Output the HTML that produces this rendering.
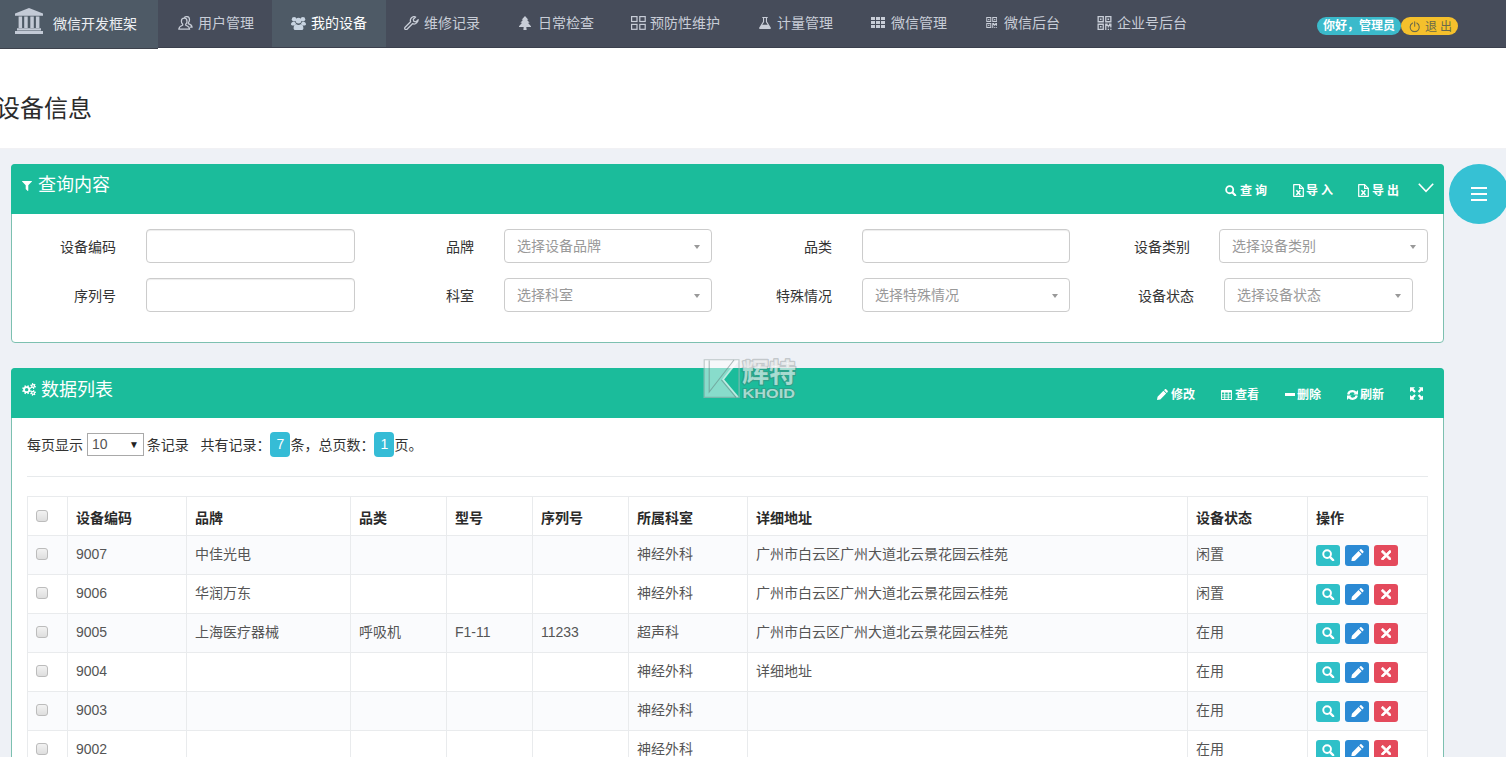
<!DOCTYPE html>
<html lang="zh-CN">
<head>
<meta charset="utf-8">
<title>设备信息</title>
<style>
*{box-sizing:border-box}
html,body{margin:0;padding:0}
body{width:1506px;height:757px;overflow:hidden;position:relative;background:#eef1f6;
 font-family:"Liberation Sans","Noto Sans CJK SC",sans-serif;font-size:14px;color:#333;line-height:20px}
.abs{position:absolute}
svg{display:block;fill:currentColor}
.ic{position:absolute}
/* ---------- navbar ---------- */
#nav{position:absolute;left:0;top:0;width:1506px;height:48px;background:#464c5a;border-bottom:1px solid #3b404d}
#brand{position:absolute;left:0;top:0;width:158px;height:49px;background:#4e5a66;border-bottom:1px solid #3d424c;z-index:5}
#brand svg{color:#c3cad6}
#brand .t{position:absolute;left:53px;top:14px;line-height:20px;font-size:14px;color:#eceff2;white-space:nowrap}
.ni{color:#c8cdd7;font-size:14px;white-space:nowrap}
.ni.on .t{color:#fff}
.ni.on svg{color:#c8d4e1}
.ni .t{position:absolute;top:13px;line-height:20px}
.bdg{position:absolute;top:17px;height:18px;border-radius:9px;font-size:12px;line-height:18px;white-space:nowrap}
/* ---------- header ---------- */
#hd{position:absolute;left:0;top:48px;width:1506px;height:101px;background:#fff;border-bottom:1px solid #f1f1f4}
#hd h2{position:absolute;left:-4px;top:45px;margin:0;font-size:24px;line-height:32px;font-weight:400;color:#2b2b2b;white-space:nowrap}
/* ---------- panels ---------- */
.panel{position:absolute;left:11px;width:1433px;background:#fff;border:1px solid #7cc0b0;border-radius:4px}
.ph{position:absolute;left:-1px;top:-1px;width:1433px;height:50px;background:#1bbc9b;border-radius:4px 4px 0 0;color:#fff}
.ph .ttl{position:absolute;top:10px;font-size:18px;line-height:24px;white-space:nowrap}
.hb{position:absolute;top:18px;font-size:12px;line-height:18px;font-weight:700;white-space:nowrap;color:#fff}
.lbl{position:absolute;width:120px;text-align:right;line-height:20px;color:#333;white-space:nowrap}
.inp{position:absolute;height:34px;border:1px solid #ccc;border-radius:4px;background:#fff;box-shadow:inset 0 1px 1px rgba(0,0,0,.075)}
.sel{position:absolute;height:34px;border:1px solid #ccc;border-radius:4px;background:#fff;color:#999;padding-left:12px;line-height:32px;white-space:nowrap}
.sel i{position:absolute;right:11.5px;top:14.5px;width:0;height:0;border-left:3.5px solid transparent;border-right:3.5px solid transparent;border-top:4.5px solid #999}
/* ---------- table ---------- */
table{position:absolute;left:15px;top:127px;border-collapse:collapse;table-layout:fixed;width:1401px}
td,th{border:1px solid #e9ebed;height:39px;padding:0 0 0 8px;text-align:left;white-space:nowrap;overflow:hidden;font-size:14px;line-height:20px}
th{font-weight:700;color:#2a2a2a;padding-top:3px}
td{color:#555;padding-bottom:2px}
tr.s td{background:#fafbfd}
.cb{display:block;width:12px;height:12px;border:1px solid #bcbcbc;border-radius:3px;background:linear-gradient(#f2f2f2,#dedede);margin:1px 0 0 0}
th .cb{margin-top:-4px}
td .cb{margin-top:0}
.bt{display:inline-block;vertical-align:top;width:24px;height:21px;border-radius:3px;margin-right:5px;position:relative;top:1px}
.bt{color:#fff}
.b1{background:#2fc0c8}.b2{background:#2b8ad4}.b3{background:#e44a5c}
.tag{display:inline-block;width:20px;height:25px;line-height:25px;border-radius:4px;background:#35bcd6;color:#fff;text-align:center;vertical-align:middle;position:relative;top:-2px}
</style>
</head>
<body>
<svg width="0" height="0" style="position:absolute">
<defs>
 <symbol id="i-bank" viewBox="0 0 28 26"><path d="M14 0 L28 5.6 V7.8 H0 V5.6 Z M3.6 8.4 h3.5 v11.6 h-3.5z M9.2 8.4 h3.5 v11.6 h-3.5z M15.3 8.4 h3.5 v11.6 h-3.5z M20.9 8.4 h3.5 v11.6 h-3.5z M2 20.3 h24 v2.3 h-24z M0 23 h28 v2.9 h-28z"/></symbol>
 <symbol id="i-user" viewBox="0 0 15 14"><g fill="none" stroke="currentColor" stroke-width="1.25" stroke-linejoin="round" stroke-linecap="round"><path d="M6.2 2.2 C8 2.2 9 3.6 9 5.3 C9 6.6 8.5 7.6 7.7 8.3 V9.2 C9.3 9.9 11.4 10.3 11.6 13.2 H0.8 C1 10.3 3.1 9.9 4.7 9.2 V8.3 C3.9 7.6 3.4 6.6 3.4 5.3 C3.4 3.6 4.4 2.2 6.2 2.2 Z"/><path d="M6.6 1.3 C7.2 0.8 7.9 0.6 8.7 0.6 C10.5 0.6 11.5 2 11.5 3.7 C11.5 5 11 6 10.2 6.7 V7.6 C11.8 8.3 13.9 8.7 14.1 11.2 H12.3"/></g></symbol>
 <symbol id="i-users" viewBox="0 0 15 14"><circle cx="3.1" cy="3.2" r="2.3"/><circle cx="11.9" cy="3.2" r="2.3"/><circle cx="7.5" cy="4.6" r="2.9"/><path d="M0 8.6 C0 6.6 1.2 5.8 2.6 5.8 C3.3 5.8 4 6.1 4.4 6.5 C4.6 7.3 5 7.9 5.5 8.3 C4.6 8.4 3.9 8.8 3.4 9.4 H1.2 C0.4 9.4 0 9.1 0 8.6Z"/><path d="M15 8.6 C15 6.6 13.8 5.8 12.4 5.8 C11.7 5.8 11 6.1 10.6 6.5 C10.4 7.3 10 7.9 9.5 8.3 C10.4 8.4 11.1 8.8 11.6 9.4 H13.8 C14.6 9.4 15 9.1 15 8.6Z"/><path d="M2.6 12.2 C2.6 9.8 3.8 8.3 5.4 8.3 C6 8.7 6.7 9 7.5 9 C8.3 9 9 8.7 9.6 8.3 C11.2 8.3 12.4 9.8 12.4 12.2 C12.4 13.3 11.7 14 10.7 14 H4.3 C3.3 14 2.6 13.3 2.6 12.2Z"/></symbol>
 <symbol id="i-wrench" viewBox="0 0 15 14"><path fill="none" stroke="currentColor" stroke-width="1.3" stroke-linejoin="round" d="M14.2 3.6 L11.9 5.9 L9.8 5.4 L9.3 3.3 L11.6 1 C10.3 0.4 8.6 0.7 7.5 1.8 C6.4 2.9 6.1 4.4 6.6 5.8 L1.1 11.3 C0.5 11.9 0.5 12.8 1.1 13.3 C1.6 13.8 2.5 13.8 3 13.3 L8.5 7.7 C9.9 8.3 11.5 8 12.6 6.9 C13.7 5.8 14.2 4.9 14.2 3.6 Z"/></symbol>
 <symbol id="i-tree" viewBox="0 0 12 14"><path d="M6 0 L9.4 3.7 H7.9 L10.6 6.7 H8.9 L12 10.2 V11 H7.3 L7.6 13.4 V14 H4.4 V13.4 L4.7 11 H0 V10.2 L3.1 6.7 H1.4 L4.1 3.7 H2.6 Z"/></symbol>
 <symbol id="i-grid4" viewBox="0 0 15 14"><g fill="none" stroke="currentColor" stroke-width="1.2"><rect x="0.6" y="0.6" width="5.4" height="4.9"/><rect x="8.8" y="0.6" width="5.4" height="4.9"/><rect x="0.6" y="8.4" width="5.4" height="4.9"/><rect x="8.8" y="8.4" width="5.4" height="4.9"/></g></symbol>
 <symbol id="i-flask" viewBox="0 0 12 12"><path d="M3.3 0 H8.7 V1.1 H8 V4.6 L11.7 10.4 C12.2 11.2 11.7 12 10.8 12 H1.2 C0.3 12 -0.2 11.2 0.3 10.4 L4 4.6 V1.1 H3.3 Z M5.1 1.1 V4.9 L3.3 7.7 H8.7 L6.9 4.9 V1.1 Z" fill-rule="evenodd"/></symbol>
 <symbol id="i-th" viewBox="0 0 14 11"><path d="M0 0h4v3h-4z M5 0h4v3h-4z M10 0h4v3h-4z M0 4h4v3h-4z M5 4h4v3h-4z M10 4h4v3h-4z M0 8h4v3h-4z M5 8h4v3h-4z M10 8h4v3h-4z"/></symbol>
 <symbol id="i-qr" viewBox="0 0 14 14"><path fill-rule="evenodd" d="M0 0h6.4v6.4h-6.4z M1.3 1.3v3.8h3.8v-3.8z M2.4 2.4h1.6v1.6h-1.6z M7.6 0h6.4v6.4h-6.4z M8.9 1.3v3.8h3.8v-3.8z M10 2.4h1.6v1.6h-1.6z M0 7.6h6.4v6.4h-6.4z M1.3 8.9v3.8h3.8v-3.8z M2.4 10h1.6v1.6h-1.6z M7.6 7.6h2.6v1.3h1.2v-1.3h2.6v3.8h-1.3v-1.2h-1.3v1.2h-1.2v-1.3h-1.3v3.9h-1.3z M10.2 12.7h1.3v1.3h-1.3z M12.7 12.7h1.3v1.3h-1.3z"/></symbol>
 <symbol id="i-filter" viewBox="0 0 10 10"><path d="M0.3 0 H9.7 C10 0 10.1 0.3 9.9 0.6 L6.3 4.3 V9.6 C6.3 9.9 6 10.1 5.7 9.9 L3.9 8.2 C3.8 8.1 3.7 7.9 3.7 7.7 V4.3 L0.1 0.6 C-0.1 0.3 0 0 0.3 0Z"/></symbol>
 <symbol id="i-cogs" viewBox="0 0 14 13"><path fill-rule="evenodd" d="M8.11 7.20 L9.17 7.74 L8.61 9.08 L7.48 8.71 L6.71 9.48 L7.08 10.61 L5.74 11.17 L5.20 10.11 L4.10 10.11 L3.56 11.17 L2.22 10.61 L2.59 9.48 L1.82 8.71 L0.69 9.08 L0.13 7.74 L1.19 7.20 L1.19 6.10 L0.13 5.56 L0.69 4.22 L1.82 4.59 L2.59 3.82 L2.22 2.69 L3.56 2.13 L4.10 3.19 L5.20 3.19 L5.74 2.13 L7.08 2.69 L6.71 3.82 L7.48 4.59 L8.61 4.22 L9.17 5.56 L8.11 6.10Z M2.95 6.65 a1.7 1.7 0 1 0 3.40 0 a1.7 1.7 0 1 0 -3.40 0Z M13.10 2.97 L13.99 3.26 L13.63 4.41 L12.73 4.15 L12.12 4.72 L12.32 5.63 L11.14 5.90 L10.92 4.99 L10.12 4.75 L9.43 5.37 L8.61 4.49 L9.28 3.84 L9.10 3.03 L8.21 2.74 L8.57 1.59 L9.47 1.85 L10.08 1.28 L9.88 0.37 L11.06 0.10 L11.28 1.01 L12.08 1.25 L12.77 0.63 L13.59 1.51 L12.92 2.16Z M10.30 3.00 a0.8 0.8 0 1 0 1.60 0 a0.8 0.8 0 1 0 -1.60 0Z M12.87 10.83 L13.51 11.51 L12.64 12.35 L11.98 11.70 L11.18 11.90 L10.91 12.79 L9.75 12.46 L9.99 11.56 L9.41 10.96 L8.50 11.18 L8.20 10.01 L9.10 9.77 L9.33 8.97 L8.69 8.29 L9.56 7.45 L10.22 8.10 L11.02 7.90 L11.29 7.01 L12.45 7.34 L12.21 8.24 L12.79 8.84 L13.70 8.62 L14.00 9.79 L13.10 10.03Z M10.30 9.90 a0.8 0.8 0 1 0 1.60 0 a0.8 0.8 0 1 0 -1.60 0Z"/></symbol>
 <symbol id="i-search" viewBox="0 0 12 12"><circle cx="4.9" cy="4.9" r="3.7" fill="none" stroke="currentColor" stroke-width="1.9"/><path d="M7.8 7.8 L10.9 10.9" stroke="currentColor" stroke-width="2.3" stroke-linecap="round"/></symbol>
 <symbol id="i-xls" viewBox="0 0 11 13"><g fill="none" stroke="currentColor" stroke-width="1.2" stroke-linejoin="round"><path d="M0.7 0.7 H6.6 L10.3 4.4 V12.3 H0.7 Z"/><path d="M6.6 0.7 V4.4 H10.3"/><path d="M3.4 6.2 L7.4 11 M7.4 6.2 L3.4 11" stroke-width="1.5"/></g></symbol>
 <symbol id="i-chev" viewBox="0 0 16 10"><path d="M0.8 0.8 L8 8.4 L15.2 0.8" fill="none" stroke="currentColor" stroke-width="1.6"/></symbol>
 <symbol id="i-pencil" viewBox="0 0 12 12"><path d="M8.6 0.4 C9 0 9.6 0 10 0.4 L11.6 2 C12 2.4 12 3 11.6 3.4 L10.7 4.3 L7.7 1.3 Z M7 2 L10 5 L3.6 11.4 L0 12 L0.6 8.4 Z"/></symbol>
 <symbol id="i-table" viewBox="0 0 11 10"><path fill-rule="evenodd" d="M0 0.8 C0 0.3 0.3 0 0.8 0 H10.2 C10.7 0 11 0.3 11 0.8 V9.2 C11 9.7 10.7 10 10.2 10 H0.8 C0.3 10 0 9.7 0 9.2 Z M0.9 2.6 V4.4 H3.3 V2.6Z M4.2 2.6 V4.4 H6.8 V2.6Z M7.7 2.6 V4.4 H10.1 V2.6Z M0.9 5.2 V6.8 H3.3 V5.2Z M4.2 5.2 V6.8 H6.8 V5.2Z M7.7 5.2 V6.8 H10.1 V5.2Z M0.9 7.6 V9.1 H3.3 V7.6Z M4.2 7.6 V9.1 H6.8 V7.6Z M7.7 7.6 V9.1 H10.1 V7.6Z"/></symbol>
 <symbol id="i-refresh" viewBox="0 0 11 10"><g fill="none" stroke="currentColor" stroke-width="2.2"><path d="M1.2 4.4 C1.6 2.5 3.3 1.2 5.5 1.2 C6.9 1.2 8 1.7 8.8 2.7"/><path d="M9.8 5.6 C9.4 7.5 7.7 8.8 5.5 8.8 C4.1 8.8 3 8.3 2.2 7.3"/></g><path d="M11 0 V4.6 H6.4 Z M0 10 V5.4 H4.6 Z"/></symbol>
 <symbol id="i-full" viewBox="0 0 14 13"><path d="M0 0 H5.2 L3.6 1.7 L6 4.1 L4.4 5.7 L1.9 3.3 L0 5 Z M14 0 V5 L12.1 3.3 L9.6 5.7 L8 4.1 L10.4 1.7 L8.8 0 Z M0 13 V8 L1.9 9.7 L4.4 7.3 L6 8.9 L3.6 11.3 L5.2 13 Z M14 13 H8.8 L10.4 11.3 L8 8.9 L9.6 7.3 L12.1 9.7 L14 8 Z"/></symbol>
 <symbol id="i-times" viewBox="0 0 10 10"><path d="M1.6 0.2 L5 3.6 L8.4 0.2 L9.8 1.6 L6.4 5 L9.8 8.4 L8.4 9.8 L5 6.4 L1.6 9.8 L0.2 8.4 L3.6 5 L0.2 1.6 Z" stroke="currentColor" stroke-width="0.8" stroke-linejoin="round"/></symbol>
 <symbol id="i-power" viewBox="0 0 12 12"><g fill="none" stroke="currentColor" stroke-width="1.1" stroke-linecap="round"><path d="M3.8 2.2 C2.2 3 1.2 4.6 1.2 6.4 C1.2 9 3.3 11.2 6 11.2 C8.7 11.2 10.8 9 10.8 6.4 C10.8 4.6 9.8 3 8.2 2.2"/><path d="M6 0.8 V5.6"/></g></symbol>
</defs></svg>
<!-- NAVBAR -->
<div id="nav">
 <div class="abs" style="left:272px;top:0;width:113.5px;height:47px;background:#4e5a66"></div>
 <div class="ni"><svg class="ic" style="left:178px;top:16px" width="15" height="14"><use href="#i-user"/></svg><span class="t" style="left:198px">用户管理</span></div>
 <div class="ni on"><svg class="ic" style="left:291px;top:16px" width="15" height="14"><use href="#i-users"/></svg><span class="t" style="left:311px">我的设备</span></div>
 <div class="ni"><svg class="ic" style="left:404px;top:16px" width="15" height="14"><use href="#i-wrench"/></svg><span class="t" style="left:424px">维修记录</span></div>
 <div class="ni"><svg class="ic" style="left:518.6px;top:16px" width="12" height="14"><use href="#i-tree"/></svg><span class="t" style="left:538px">日常检查</span></div>
 <div class="ni"><svg class="ic" style="left:630.5px;top:16px" width="15" height="14"><use href="#i-grid4"/></svg><span class="t" style="left:650px">预防性维护</span></div>
 <div class="ni"><svg class="ic" style="left:759px;top:17px" width="12" height="12"><use href="#i-flask"/></svg><span class="t" style="left:777px">计量管理</span></div>
 <div class="ni"><svg class="ic" style="left:871px;top:17px" width="14" height="11"><use href="#i-th"/></svg><span class="t" style="left:891px">微信管理</span></div>
 <div class="ni"><svg class="ic" style="left:985.6px;top:17.3px" width="11.5" height="11"><use href="#i-qr"/></svg><span class="t" style="left:1004px">微信后台</span></div>
 <div class="ni"><svg class="ic" style="left:1097px;top:16px" width="15" height="14"><use href="#i-qr"/></svg><span class="t" style="left:1117px">企业号后台</span></div>
 <div class="bdg" style="left:1317px;width:84px;background:#3bbacb;color:#fff;font-weight:700;padding-left:6px">你好，管理员</div>
 <div class="bdg" style="left:1401px;width:57px;background:#f5c02c;color:#6a6a4a;padding-left:24px;letter-spacing:3px;line-height:21px"><svg class="ic" style="left:8.3px;top:4.2px" width="11.4" height="11.4"><use href="#i-power"/></svg>退出</div>
</div>
<div id="brand"><svg class="ic" style="left:15px;top:8.3px" width="28" height="26"><use href="#i-bank"/></svg><span class="t">微信开发框架</span></div>

<!-- PAGE HEADER -->
<div id="hd"><h2>设备信息</h2></div>

<!-- PANEL 1 -->
<div class="panel" style="top:164px;height:179px">
 <div class="ph">
  <svg class="ic" style="left:11px;top:17px" width="10" height="10"><use href="#i-filter"/></svg><span class="ttl" style="left:27px;top:9px">查询内容</span>
  <svg class="ic" style="left:1214.4px;top:20.5px" width="11.5" height="11.5"><use href="#i-search"/></svg><span class="hb" style="left:1229px;letter-spacing:3px">查询</span>
  <svg class="ic" style="left:1281.8px;top:20px" width="11" height="13"><use href="#i-xls"/></svg><span class="hb" style="left:1295px;letter-spacing:3px">导入</span>
  <svg class="ic" style="left:1347.4px;top:20px" width="11" height="13"><use href="#i-xls"/></svg><span class="hb" style="left:1361px;letter-spacing:3px">导出</span><svg class="ic" style="left:1407px;top:19.2px" width="16" height="10"><use href="#i-chev"/></svg>
 </div>
 <span class="lbl" style="left:-16px;top:72px">设备编码</span>
 <div class="inp" style="left:134px;top:64px;width:209px"></div>
 <span class="lbl" style="left:342px;top:72px">品牌</span>
 <div class="sel" style="left:492px;top:64px;width:208px">选择设备品牌<i></i></div>
 <span class="lbl" style="left:700px;top:72px">品类</span>
 <div class="inp" style="left:850px;top:64px;width:208px"></div>
 <span class="lbl" style="left:1058px;top:72px">设备类别</span>
 <div class="sel" style="left:1207px;top:64px;width:209px">选择设备类别<i></i></div>

 <span class="lbl" style="left:-16px;top:121px">序列号</span>
 <div class="inp" style="left:134px;top:113px;width:209px"></div>
 <span class="lbl" style="left:342px;top:121px">科室</span>
 <div class="sel" style="left:492px;top:113px;width:208px">选择科室<i></i></div>
 <span class="lbl" style="left:700px;top:121px">特殊情况</span>
 <div class="sel" style="left:850px;top:113px;width:208px">选择特殊情况<i></i></div>
 <span class="lbl" style="left:1062px;top:121px">设备状态</span>
 <div class="sel" style="left:1212px;top:113px;width:189px">选择设备状态<i></i></div>
</div>

<!-- PANEL 2 -->
<div class="panel" style="top:368px;height:420px;border-radius:4px 4px 0 0">
 <div class="ph">
  <svg class="ic" style="left:11px;top:15.3px" width="14" height="13"><use href="#i-cogs"/></svg><span class="ttl" style="left:30px">数据列表</span>
  <svg class="ic" style="left:1146.3px;top:21px" width="11" height="11"><use href="#i-pencil"/></svg><span class="hb" style="left:1160px">修改</span>
  <svg class="ic" style="left:1209.7px;top:21.5px" width="11" height="10"><use href="#i-table"/></svg><span class="hb" style="left:1224px">查看</span>
  <div class="abs" style="left:1273.6px;top:25.2px;width:10px;height:2.6px;background:#fff"></div><span class="hb" style="left:1286px">删除</span>
  <svg class="ic" style="left:1335.6px;top:22px" width="11" height="10"><use href="#i-refresh"/></svg><span class="hb" style="left:1349px">刷新</span><svg class="ic" style="left:1398.6px;top:19.3px" width="13.6" height="13"><use href="#i-full"/></svg>
 </div>
 <div class="abs" style="left:15px;top:64px;line-height:24px;white-space:nowrap;color:#333">每页显示 <span style="display:inline-block;width:57px;height:23px;margin-right:-1px;border:1px solid #a9a9a9;background:#fff;vertical-align:middle;line-height:21px;padding-left:4px;position:relative;top:-2px;color:#555">10<span style="position:absolute;right:4px;top:0;font-size:10px;color:#222">▼</span></span> 条记录 &nbsp; 共有记录：<span class="tag">7</span>条，总页数：<span class="tag">1</span>页。</div>
 <div class="abs" style="left:15px;top:107px;width:1401px;height:1px;background:#e7eaec"></div>
 <table>
  <colgroup><col style="width:40px"><col style="width:119px"><col style="width:164px"><col style="width:96px"><col style="width:86px"><col style="width:96px"><col style="width:119px"><col style="width:440px"><col style="width:120px"><col style="width:120px"></colgroup>
  <tr><th><span class="cb"></span></th><th>设备编码</th><th>品牌</th><th>品类</th><th>型号</th><th>序列号</th><th>所属科室</th><th>详细地址</th><th>设备状态</th><th>操作</th></tr>
  <tr class="s"><td><span class="cb"></span></td><td>9007</td><td>中佳光电</td><td></td><td></td><td></td><td>神经外科</td><td>广州市白云区广州大道北云景花园云桂苑</td><td>闲置</td><td><span class="bt b1"><svg class="ic" style="left:6px;top:4px" width="12.5" height="12.5"><use href="#i-search"/></svg></span><span class="bt b2"><svg class="ic" style="left:5.6px;top:4px" width="13" height="12.4"><use href="#i-pencil"/></svg></span><span class="bt b3"><svg class="ic" style="left:6.7px;top:5.2px" width="10.6" height="10.6"><use href="#i-times"/></svg></span></td></tr>
  <tr><td><span class="cb"></span></td><td>9006</td><td>华润万东</td><td></td><td></td><td></td><td>神经外科</td><td>广州市白云区广州大道北云景花园云桂苑</td><td>闲置</td><td><span class="bt b1"><svg class="ic" style="left:6px;top:4px" width="12.5" height="12.5"><use href="#i-search"/></svg></span><span class="bt b2"><svg class="ic" style="left:5.6px;top:4px" width="13" height="12.4"><use href="#i-pencil"/></svg></span><span class="bt b3"><svg class="ic" style="left:6.7px;top:5.2px" width="10.6" height="10.6"><use href="#i-times"/></svg></span></td></tr>
  <tr class="s"><td><span class="cb"></span></td><td>9005</td><td>上海医疗器械</td><td>呼吸机</td><td>F1-11</td><td>11233</td><td>超声科</td><td>广州市白云区广州大道北云景花园云桂苑</td><td>在用</td><td><span class="bt b1"><svg class="ic" style="left:6px;top:4px" width="12.5" height="12.5"><use href="#i-search"/></svg></span><span class="bt b2"><svg class="ic" style="left:5.6px;top:4px" width="13" height="12.4"><use href="#i-pencil"/></svg></span><span class="bt b3"><svg class="ic" style="left:6.7px;top:5.2px" width="10.6" height="10.6"><use href="#i-times"/></svg></span></td></tr>
  <tr><td><span class="cb"></span></td><td>9004</td><td></td><td></td><td></td><td></td><td>神经外科</td><td>详细地址</td><td>在用</td><td><span class="bt b1"><svg class="ic" style="left:6px;top:4px" width="12.5" height="12.5"><use href="#i-search"/></svg></span><span class="bt b2"><svg class="ic" style="left:5.6px;top:4px" width="13" height="12.4"><use href="#i-pencil"/></svg></span><span class="bt b3"><svg class="ic" style="left:6.7px;top:5.2px" width="10.6" height="10.6"><use href="#i-times"/></svg></span></td></tr>
  <tr class="s"><td><span class="cb"></span></td><td>9003</td><td></td><td></td><td></td><td></td><td>神经外科</td><td></td><td>在用</td><td><span class="bt b1"><svg class="ic" style="left:6px;top:4px" width="12.5" height="12.5"><use href="#i-search"/></svg></span><span class="bt b2"><svg class="ic" style="left:5.6px;top:4px" width="13" height="12.4"><use href="#i-pencil"/></svg></span><span class="bt b3"><svg class="ic" style="left:6.7px;top:5.2px" width="10.6" height="10.6"><use href="#i-times"/></svg></span></td></tr>
  <tr><td><span class="cb"></span></td><td>9002</td><td></td><td></td><td></td><td></td><td>神经外科</td><td></td><td>在用</td><td><span class="bt b1"><svg class="ic" style="left:6px;top:4px" width="12.5" height="12.5"><use href="#i-search"/></svg></span><span class="bt b2"><svg class="ic" style="left:5.6px;top:4px" width="13" height="12.4"><use href="#i-pencil"/></svg></span><span class="bt b3"><svg class="ic" style="left:6.7px;top:5.2px" width="10.6" height="10.6"><use href="#i-times"/></svg></span></td></tr>
 </table>
</div>

<!-- WATERMARK -->
<svg class="abs" style="left:700px;top:355px;overflow:visible" width="100" height="48" viewBox="700 355 100 48">
 <path fill="#fff" fill-opacity=".48" fill-rule="evenodd" d="M703.6 359.2 H739.6 V398 H703.6 Z M738.6 361.4 L724.2 379.6 L738.6 396.6 Z"/>
 <g fill="none" stroke="#5f7a78" stroke-opacity=".5" stroke-width="1.1">
  <path d="M704.2 359.8 H739 V397.4 H704.2 Z" stroke-opacity=".38"/>
  <path d="M709.2 360.4 V392 L734 360"/>
  <path d="M721.4 379.8 L736 397.4"/>
 </g>
 <g fill="none" stroke="#fff" stroke-opacity=".45" stroke-width="1.5">
  <path d="M737.6 360.6 L723 379.6 L737.6 397"/>
 </g>
 <g fill="#fff" fill-opacity=".6" stroke="#56605f" stroke-opacity=".3" stroke-width="2.6" stroke-linejoin="round" style="paint-order:stroke">
  <text x="742" y="381.5" font-size="26.5" font-weight="700" textLength="54" lengthAdjust="spacingAndGlyphs" style="font-family:'Liberation Sans','Noto Sans CJK SC',sans-serif">辉特</text>
  <text x="742.5" y="397.6" font-size="13.4" font-weight="700" textLength="52.5" lengthAdjust="spacingAndGlyphs" stroke-width="1.8" style="font-family:'Liberation Sans',sans-serif">KHOID</text>
 </g>
</svg>
<!-- FLOATING BUTTON -->
<div class="abs" style="left:1449px;top:164px;width:60px;height:60px;border-radius:30px;background:#36c1d4">
 <div class="abs" style="left:22px;top:23px;width:16px;height:2px;background:#fff"></div>
 <div class="abs" style="left:22px;top:29px;width:16px;height:2px;background:#fff"></div>
 <div class="abs" style="left:22px;top:35px;width:16px;height:2px;background:#fff"></div>
</div>
</body>
</html>
